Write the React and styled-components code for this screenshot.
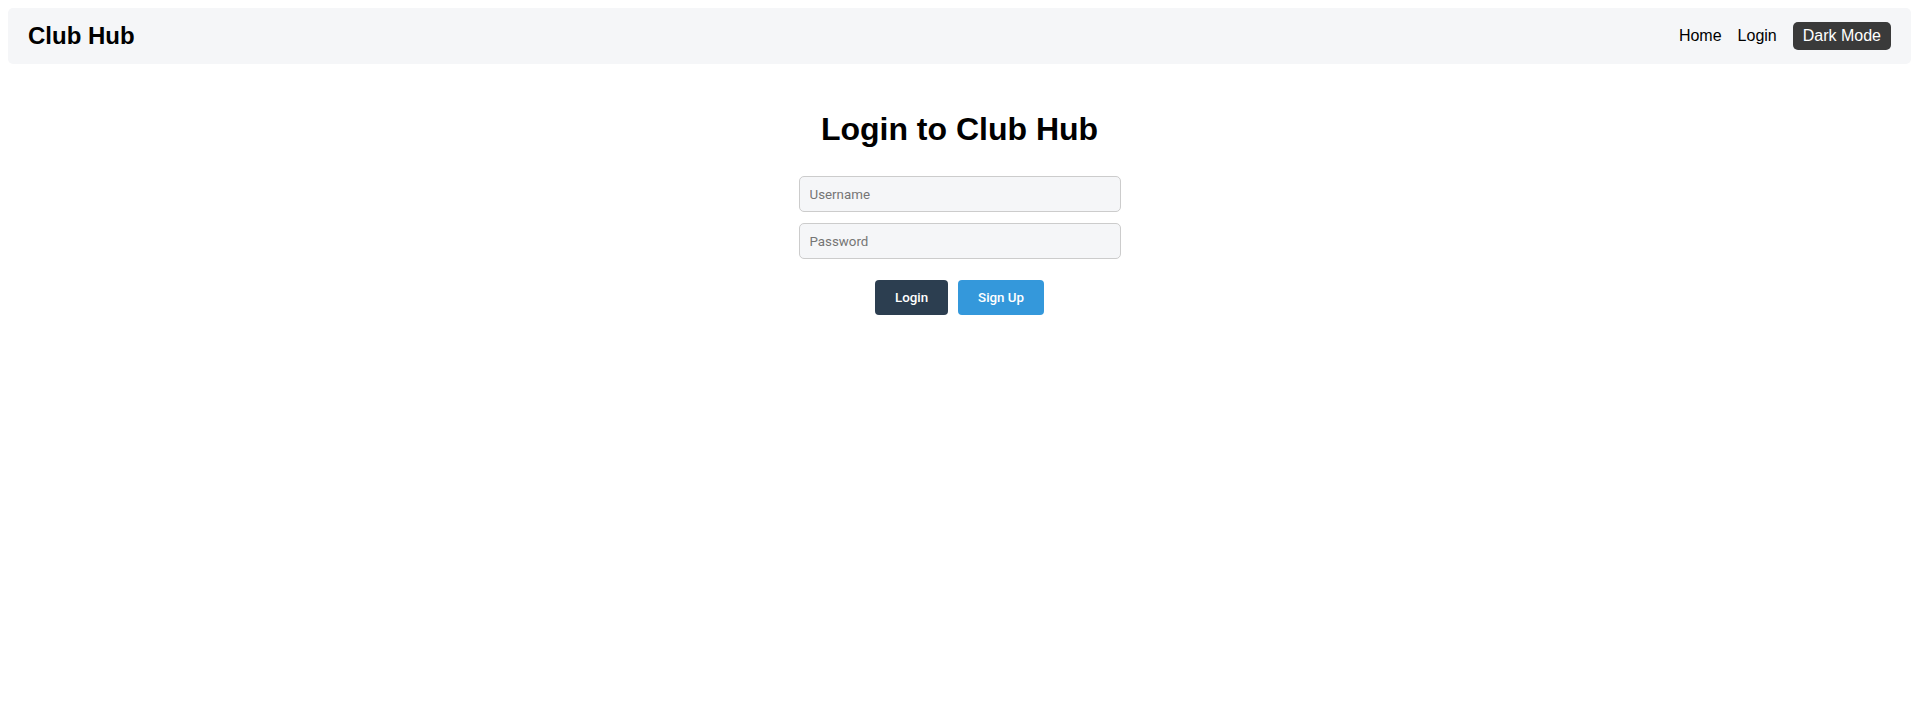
import React from "react";
import styled, { createGlobalStyle } from "styled-components";

const GlobalStyle = createGlobalStyle`
  html, body { background: #ffffff; }
  body {
    margin: 8px;
    font-family: "Liberation Sans", Arial, sans-serif;
    color: #000;
  }
  * { box-sizing: border-box; }
`;

const NavBar = styled.nav`
  display: flex;
  align-items: center;
  justify-content: space-between;
  height: 56px;
  padding: 0 20px;
  background: #f5f6f8;
  border-radius: 5px;
`;

const Brand = styled.div`
  font-family: "Liberation Sans", Arial, sans-serif;
  font-size: 24px;
  font-weight: 700;
  color: #000;
`;

const NavLinks = styled.div`
  display: flex;
  align-items: center;
  gap: 16px;
`;

const NavLink = styled.a`
  font-family: "Liberation Sans", Arial, sans-serif;
  font-size: 16px;
  color: #000;
  text-decoration: none;
  cursor: pointer;
`;

const ThemeToggle = styled.button`
  font-family: "Liberation Sans", Arial, sans-serif;
  font-size: 16px;
  line-height: 18px;
  height: 28px;
  padding: 0 10px;
  border: none;
  border-radius: 5px;
  background: #3a3a3a;
  color: #fff;
  cursor: pointer;
`;

const Main = styled.main`
  display: flex;
  flex-direction: column;
  align-items: center;
  padding-top: 47px;
`;

const Title = styled.h1`
  margin: 0 0 28px;
  font-family: "Liberation Sans", Arial, sans-serif;
  font-size: 32px;
  line-height: 37px;
  font-weight: 700;
`;

const Form = styled.form`
  display: flex;
  flex-direction: column;
  align-items: center;
`;

const Fields = styled.div`
  display: flex;
  flex-direction: column;
  gap: 11px;
`;

const Input = styled.input`
  width: 322px;
  height: 36px;
  padding: 0 10px;
  border: 1px solid #cccccc;
  border-radius: 5px;
  background: #f5f6f8;
  font-family: Roboto, "Liberation Sans", sans-serif;
  font-size: 13.33px;
  color: #222;
  outline: none;
  &::placeholder { color: #757575; }
`;

const Actions = styled.div`
  display: flex;
  gap: 10px;
  margin-top: 21px;
`;

const ActionButton = styled.button`
  height: 35px;
  padding: 0 20px;
  border: none;
  border-radius: 4px;
  background: ${(p) => (p.$variant === "primary" ? "#2c3e50" : "#3498db")};
  color: #fff;
  font-family: Roboto, "Liberation Sans", sans-serif;
  font-size: 13.33px;
  font-weight: 500;
  cursor: pointer;
`;

export default function App() {
  return (
    <>
      <GlobalStyle />
      <NavBar>
        <Brand>Club Hub</Brand>
        <NavLinks>
          <NavLink>Home</NavLink>
          <NavLink>Login</NavLink>
          <ThemeToggle type="button">Dark Mode</ThemeToggle>
        </NavLinks>
      </NavBar>
      <Main>
        <Title>Login to Club Hub</Title>
        <Form onSubmit={(e) => e.preventDefault()}>
          <Fields>
            <Input type="text" placeholder="Username" />
            <Input type="password" placeholder="Password" />
          </Fields>
          <Actions>
            <ActionButton $variant="primary" type="submit">Login</ActionButton>
            <ActionButton $variant="secondary" type="button">Sign Up</ActionButton>
          </Actions>
        </Form>
      </Main>
    </>
  );
}
